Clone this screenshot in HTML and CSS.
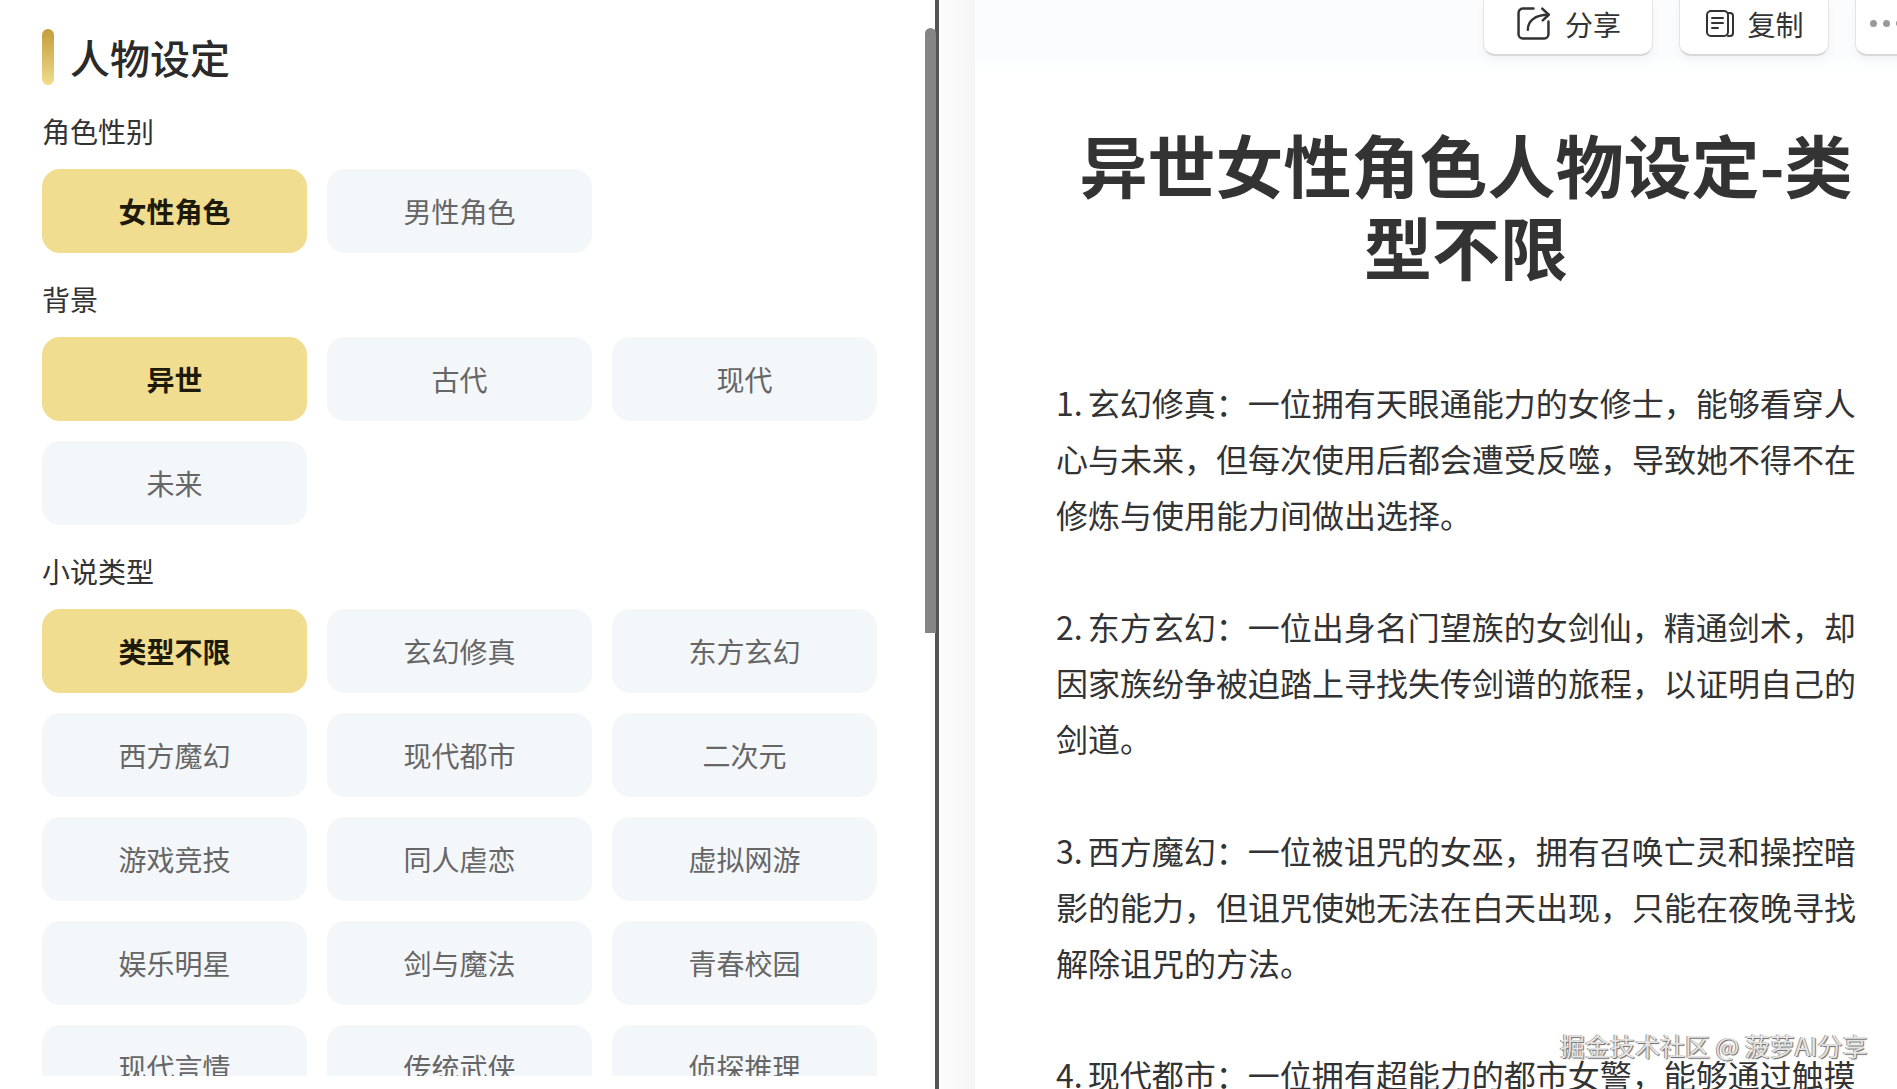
FILE: index.html
```html
<!DOCTYPE html>
<html lang="zh-CN">
<head>
<meta charset="utf-8">
<title>人物设定</title>
<link rel="stylesheet" href="styles.css">
</head>
<body>
<div class="app">
  <aside class="left">
    <div class="left-scroll">
      <h2 class="heading"><span class="heading-bar"></span>人物设定</h2>
      <div class="label label-first">角色性别</div>
      <div class="options">
        <div class="opt on">女性角色</div>
        <div class="opt">男性角色</div>
      </div>
      <div class="label">背景</div>
      <div class="options">
        <div class="opt on">异世</div>
        <div class="opt">古代</div>
        <div class="opt">现代</div>
        <div class="opt">未来</div>
      </div>
      <div class="label">小说类型</div>
      <div class="options">
        <div class="opt on">类型不限</div>
        <div class="opt">玄幻修真</div>
        <div class="opt">东方玄幻</div>
        <div class="opt">西方魔幻</div>
        <div class="opt">现代都市</div>
        <div class="opt">二次元</div>
        <div class="opt">游戏竞技</div>
        <div class="opt">同人虐恋</div>
        <div class="opt">虚拟网游</div>
        <div class="opt">娱乐明星</div>
        <div class="opt">剑与魔法</div>
        <div class="opt">青春校园</div>
        <div class="opt">现代言情</div>
        <div class="opt">传统武侠</div>
        <div class="opt">侦探推理</div>
      </div>
    </div>
    <div class="scrollbar"></div>
  </aside>
  <div class="divider"></div>
  <div class="strip"></div>
  <main class="right">
    <div class="toolbar">
      <div class="tool tool-share">
        <svg class="icon-share" viewBox="0 0 32 32" fill="none" stroke="#333" stroke-width="2.4" stroke-linecap="round" stroke-linejoin="round">
          <path d="M16 1.500H5.500a4 4 0 0 0-4 4v21a4 4 0 0 0 4 4h21a4 4 0 0 0 4-4V14"/>
          <path d="M10.500 22C10.500 14 17 7.500 30.500 7.500"/>
          <path d="M24.500 1.500L30.800 7.500L25 13"/>
        </svg>
        <span>分享</span>
      </div>
      <div class="tool tool-copy">
        <svg class="icon-copy" viewBox="0 0 28 27" fill="none" stroke="#333" stroke-width="2" stroke-linecap="round" stroke-linejoin="round">
          <rect x="1" y="1" width="21" height="25" rx="4"/>
          <path d="M22 3h2a3 3 0 0 1 3 3v17a3 3 0 0 1-3 3h-2"/>
          <path d="M6 8H17M6 13H17M6 18H12"/>
        </svg>
        <span>复制</span>
      </div>
      <div class="tool tool-more"><i></i><i></i><i></i></div>
    </div>
    <article class="doc">
      <h1 class="doc-title">异世女性角色人物设定-类型不限</h1>
      <p>1. 玄幻修真：一位拥有天眼通能力的女修士，能够看穿人心与未来，但每次使用后都会遭受反噬，导致她不得不在修炼与使用能力间做出选择。</p>
      <p>2. 东方玄幻：一位出身名门望族的女剑仙，精通剑术，却因家族纷争被迫踏上寻找失传剑谱的旅程，以证明自己的剑道。</p>
      <p>3. 西方魔幻：一位被诅咒的女巫，拥有召唤亡灵和操控暗影的能力，但诅咒使她无法在白天出现，只能在夜晚寻找解除诅咒的方法。</p>
      <p>4. 现代都市：一位拥有超能力的都市女警，能够通过触摸</p>
    </article>
  </main>
  <div class="watermark">掘金技术社区 @ 菠萝AI分享</div>
</div>
</body>
</html>
```
FILE: styles.css
```css
* { box-sizing: border-box; }
html, body { margin: 0; padding: 0; height: 100%; background: #fff; overflow: hidden; }
body { font-family: "Noto Sans CJK SC", "Noto Sans", sans-serif; }
.app { position: relative; display: flex; width: 1897px; height: 1089px; overflow: hidden; }

.left { position: relative; flex: 0 0 935px; height: 1089px; background: #fff; }
.left-scroll { height: 1076px; overflow: hidden; padding: 29px 0 0 42px; }
.heading { display: flex; align-items: center; gap: 16px; margin: 0 0 26px; height: 56px; font-size: 40px; font-weight: 500; color: #2a2a2a; line-height: 56px; }
.heading-bar { width: 12px; height: 56px; border-radius: 6px; background: linear-gradient(180deg, #c49c3c, #f0dc8c); }
.label { height: 40px; line-height: 40px; margin: 26px 0 18px; font-size: 28px; color: #333; }
.label-first { margin-top: 0; }
.options { display: grid; grid-template-columns: repeat(3, 265px); gap: 20px; }
.opt { height: 84px; border-radius: 18px; background: #f4f7fa; color: #666; font-size: 28px; display: flex; align-items: center; justify-content: center; }
.opt.on { background: #f1dd8f; color: #1d1a0c; font-weight: 700; }
.scrollbar { position: absolute; left: 925px; top: 28px; width: 11px; height: 605px; border-radius: 6px 6px 0 0; background: #858585; }

.divider { flex: 0 0 4px; background: #555; }
.strip { flex: 0 0 36px; background: linear-gradient(90deg, #fdfdfd, #f5f5f5); }

.right { flex: 1 1 0; min-width: 0; height: 1089px; overflow: hidden; background: #fff; }
.toolbar { display: flex; height: 76px; padding-left: 508px; gap: 26px; background: linear-gradient(180deg, #fbfcfd 74%, #fff 100%); }
.tool { flex: none; height: 56px; padding-bottom: 7px; display: flex; align-items: center; justify-content: center; gap: 17px; background: #fff; border: 1px solid #e3e3e3; border-top: 0; border-bottom: 2px solid #d8d8d8; border-radius: 0 0 12px 12px; box-shadow: 0 4px 10px rgba(0, 0, 0, .04); font-size: 28px; color: #333; }
.tool-share { width: 170px; gap: 15px; padding-left: 2px; }
.tool-copy { width: 150px; gap: 13px; padding-left: 2px; }
.tool-more { width: 60px; gap: 6px; justify-content: flex-start; padding-left: 14px; }
.tool-more i { flex: none; width: 7px; height: 7px; border-radius: 50%; background: #999; }
.icon-share { width: 33px; height: 33px; }
.icon-copy { width: 28px; height: 27px; }

.doc { width: 810px; margin-left: 81px; padding-top: 47px; color: #333; }
.doc-title { width: 780px; margin: 0 0 87px 20px; font-size: 68px; line-height: 82px; font-weight: 700; text-align: center; color: #333; }
.doc p { margin: 0 0 56px; font-size: 32px; line-height: 56px; word-spacing: -2px; }

.watermark { position: absolute; left: 1560px; top: 1028px; font-size: 25px; line-height: 34px; color: #e4e4e4; text-shadow: 1px 1px 1px #666, -1px 0 0 #999; white-space: nowrap; }
```
